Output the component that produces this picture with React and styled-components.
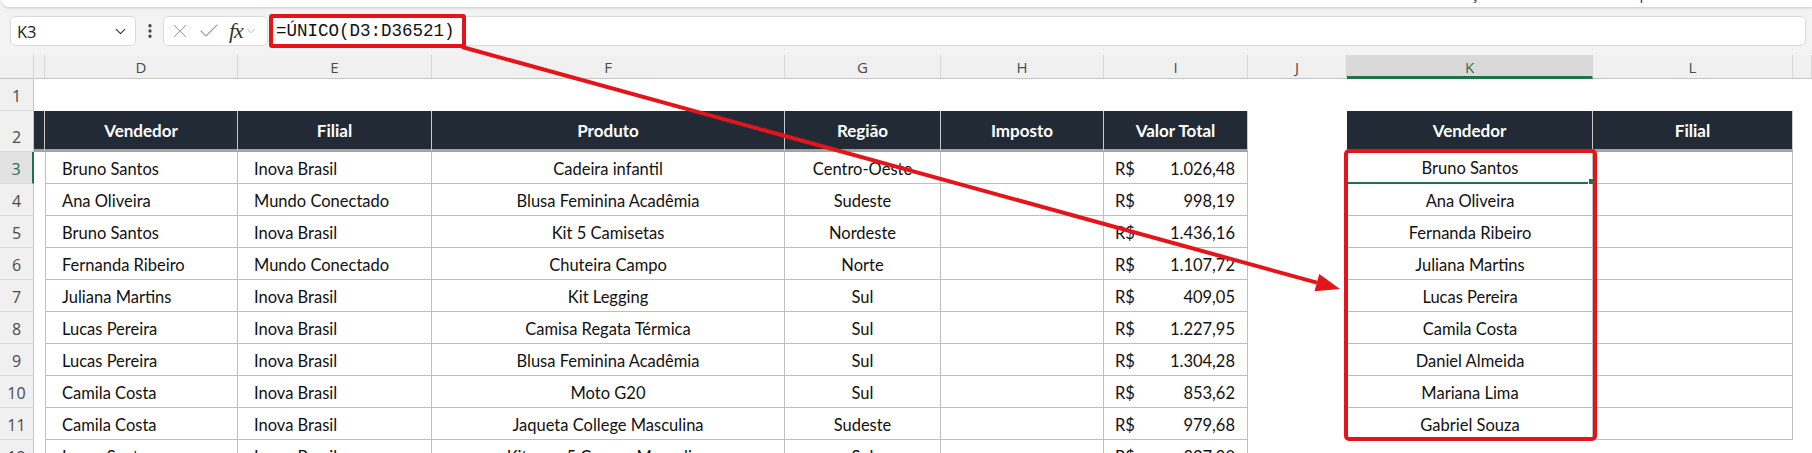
import React from "react";
import styled, { createGlobalStyle } from "styled-components";
import { X, Check, ChevronDown, EllipsisVertical } from "lucide-react";

const GlobalStyle = createGlobalStyle`
  html, body { margin: 0; padding: 0; background: #fff; }
  body { overflow: hidden; }
`;

// widths: row header, C, D, E, F, G, H, I, J, K, L, M
const COLS = [34, 11, 193, 194, 353, 156, 163, 144, 99, 246, 200, 19];
const LETTERS = ["", "", "D", "E", "F", "G", "H", "I", "J", "K", "L", ""];

const vendas = [
  ["Bruno Santos", "Inova Brasil", "Cadeira infantil", "Centro-Oeste", "1.026,48"],
  ["Ana Oliveira", "Mundo Conectado", "Blusa Feminina Acadêmia", "Sudeste", "998,19"],
  ["Bruno Santos", "Inova Brasil", "Kit 5 Camisetas", "Nordeste", "1.436,16"],
  ["Fernanda Ribeiro", "Mundo Conectado", "Chuteira Campo", "Norte", "1.107,72"],
  ["Juliana Martins", "Inova Brasil", "Kit Legging", "Sul", "409,05"],
  ["Lucas Pereira", "Inova Brasil", "Camisa Regata Térmica", "Sul", "1.227,95"],
  ["Lucas Pereira", "Inova Brasil", "Blusa Feminina Acadêmia", "Sul", "1.304,28"],
  ["Camila Costa", "Inova Brasil", "Moto G20", "Sul", "853,62"],
  ["Camila Costa", "Inova Brasil", "Jaqueta College Masculina", "Sudeste", "979,68"],
  ["Lucas Santos", "Inova Brasil", "Kit com 5 Cuecas Masculina", "Sul", "827,90"],
];

const unicos = [
  "Bruno Santos",
  "Ana Oliveira",
  "Fernanda Ribeiro",
  "Juliana Martins",
  "Lucas Pereira",
  "Camila Costa",
  "Daniel Almeida",
  "Mariana Lima",
  "Gabriel Souza",
];

const Page = styled.div`
  position: relative;
  width: 1812px;
  height: 453px;
  overflow: hidden;
  background: #f3f3f3;
  font-family: Lato, "Open Sans", sans-serif;
`;

const Ribbon = styled.div`
  height: 7px;
  margin-left: 2px;
  background: #fff;
  border-bottom-left-radius: 8px;
  box-shadow: 0 1px 3px rgba(0, 0, 0, 0.18);
  overflow: hidden;
  display: flex;
  padding-left: 1410px;
  gap: 118px;
`;

const RibbonLabel = styled.span`
  font: 15px "Open Sans", sans-serif;
  line-height: 15px;
  color: #333;
  margin-top: -14px;
  white-space: nowrap;
`;

const FormulaBar = styled.div`
  height: 48px;
  display: flex;
  align-items: center;
  padding: 0 6px 0 10px;
`;

const Box = styled.div`
  height: 30px;
  box-sizing: border-box;
  background: #fff;
  border: 1px solid #dcdcdc;
  border-radius: 5px;
  display: flex;
  align-items: center;
`;

const NameBox = styled(Box)`
  width: 126px;
  justify-content: space-between;
  padding: 0 6px 0 6px;
  font: 16.5px "Open Sans", sans-serif;
  color: #222;
`;

const Dots = styled.div`
  width: 27px;
  display: flex;
  justify-content: center;
  color: #444;
`;

const FxGroup = styled(Box)`
  width: 105px;
  padding-left: 5px;
  gap: 6px;
  color: #a0a0a0;
`;

const Fx = styled.span`
  font: italic 22px "Liberation Serif", serif;
  color: #333;
  margin-left: 2px;
  letter-spacing: -1px;
`;

const FormulaInput = styled(Box)`
  flex: 1;
  margin-left: 1px;
`;

const Highlight = styled.div`
  width: 197px;
  height: 34px;
  box-sizing: border-box;
  margin-left: -1px;
  border: 4px solid #e3141a;
  border-radius: 3px;
  display: flex;
  align-items: center;
  padding-left: 3px;
  font: 17.5px "Liberation Mono", monospace;
  color: #111;
`;

const Grid = styled.div`
  display: grid;
  grid-template-columns: ${COLS.map((c) => c + "px").join(" ")};
  grid-template-rows: 24px 32px 41px repeat(10, 32px);
  background: #fff;
`;

const ColHeader = styled.div`
  box-sizing: border-box;
  display: flex;
  align-items: center;
  justify-content: center;
  background: ${(p) => (p.$selected ? "#d9d9d9" : "#f0f0f0")};
  border-right: 1px solid #d6d6d6;
  border-bottom: ${(p) => (p.$selected ? "3px solid #217346" : "1px solid #c4c4c4")};
  padding-top: ${(p) => (p.$selected ? "2px" : "0")};
  font: 15px "Open Sans", sans-serif;
  color: ${(p) => (p.$selected ? "#217346" : "#4a4a4a")};
`;

const RowHeader = styled.div`
  box-sizing: border-box;
  display: flex;
  align-items: flex-end;
  justify-content: center;
  padding-bottom: 3px;
  background: ${(p) => (p.$selected ? "#e2e2e2" : "#f0f0f0")};
  border-right: ${(p) => (p.$selected ? "2px solid #217346" : "1px solid #c4c4c4")};
  border-bottom: 1px solid #dadada;
  font: 16px "Open Sans", sans-serif;
  color: ${(p) => (p.$selected ? "#217346" : "#4a4a4a")};
`;

const Blank = styled.div`
  background: #fff;
`;

const Head = styled.div`
  box-sizing: border-box;
  display: flex;
  align-items: center;
  justify-content: center;
  background: #222b35;
  border-right: 1px solid #c9c9c9;
  border-bottom: 3px solid #a3a3a3;
  color: #fff;
  font-weight: 700;
  font-size: 17px;
`;

const Cell = styled.div`
  position: relative;
  box-sizing: border-box;
  display: flex;
  align-items: center;
  justify-content: ${(p) => p.$align || "flex-start"};
  padding: 2px ${(p) => (p.$align === "space-between" ? "12px" : "0")} 0
    ${(p) => (p.$align === "flex-start" || !p.$align ? "16px" : p.$align === "space-between" ? "11px" : "0")};
  background: #fff;
  border-right: 1px solid #bfbfbf;
  border-bottom: ${(p) => (p.$active ? "2px solid #217346" : "1px solid #bfbfbf")};
  border-left: ${(p) => (p.$first ? "1px solid #bfbfbf" : "none")};
  color: #111;
  font-size: 16.5px;
  white-space: nowrap;
`;

const Handle = styled.span`
  position: absolute;
  right: -4px;
  bottom: -4px;
  width: 6px;
  height: 6px;
  background: #217346;
  border: 1px solid #fff;
`;

const Overlay = styled.svg`
  position: absolute;
  left: 0;
  top: 0;
  pointer-events: none;
`;

function SheetRows() {
  const out = [];
  out.push(<ColHeader key="corner" />);
  LETTERS.slice(1).map((l, i) =>
    out.push(
      <ColHeader key={"c" + i} $selected={l === "K"}>
        {l}
      </ColHeader>
    )
  );

  // row 1
  out.push(<RowHeader key="r1">1</RowHeader>);
  for (let i = 1; i < COLS.length; i++) out.push(<Blank key={"b1" + i} />);

  // row 2 (headers)
  out.push(<RowHeader key="r2">2</RowHeader>);
  ["", "Vendedor", "Filial", "Produto", "Região", "Imposto", "Valor Total"].forEach((h, i) =>
    out.push(<Head key={"h" + i}>{h}</Head>)
  );
  out.push(<Blank key="h-j" />);
  out.push(<Head key="h-k">Vendedor</Head>);
  out.push(<Head key="h-l">Filial</Head>);
  out.push(<Blank key="h-m" />);

  vendas.forEach((v, idx) => {
    const n = idx + 3;
    out.push(
      <RowHeader key={"r" + n} $selected={n === 3}>
        {n}
      </RowHeader>
    );
    out.push(<Blank key={"c" + n} />);
    out.push(<Cell key={"d" + n} $first>{v[0]}</Cell>);
    out.push(<Cell key={"e" + n}>{v[1]}</Cell>);
    out.push(<Cell key={"f" + n} $align="center">{v[2]}</Cell>);
    out.push(<Cell key={"g" + n} $align="center">{v[3]}</Cell>);
    out.push(<Cell key={"h" + n} $align="center" />);
    out.push(
      <Cell key={"i" + n} $align="space-between">
        <span>R$</span>
        <span>{v[4]}</span>
      </Cell>
    );
    out.push(<Blank key={"j" + n} />);
    if (idx < unicos.length) {
      out.push(
        <Cell key={"k" + n} $first $align="center" $active={n === 3}>
          {unicos[idx]}
          {n === 3 && <Handle />}
        </Cell>
      );
      out.push(<Cell key={"l" + n} $align="center" />);
    } else {
      out.push(<Blank key={"k" + n} />);
      out.push(<Blank key={"l" + n} />);
    }
    out.push(<Blank key={"m" + n} />);
  });
  return out;
}

export default function App() {
  // arrow: from formula box corner to the result column
  const x1 = 462, y1 = 47, tx = 1340, ty = 289;
  const dx = tx - x1, dy = ty - y1;
  const len = Math.hypot(dx, dy);
  const ux = dx / len, uy = dy / len;
  const bx = tx - ux * 24, by = ty - uy * 24;
  const head = `${tx},${ty} ${bx - uy * 9},${by + ux * 9} ${bx + uy * 9},${by - ux * 9}`;

  return (
    <>
      <GlobalStyle />
      <Page>
        <Ribbon>
          <RibbonLabel>Formatação</RibbonLabel>
          <RibbonLabel>Grupo</RibbonLabel>
        </Ribbon>
        <FormulaBar>
          <NameBox>
            <span>K3</span>
            <ChevronDown size={17} strokeWidth={1.6} color="#333" />
          </NameBox>
          <Dots>
            <EllipsisVertical size={18} strokeWidth={2.4} />
          </Dots>
          <FxGroup>
            <X size={22} strokeWidth={1.1} />
            <Check size={24} strokeWidth={1.1} />
            <Fx>fx</Fx>
            <ChevronDown size={14} strokeWidth={1.3} style={{ marginLeft: -5 }} />
          </FxGroup>
          <FormulaInput>
            <Highlight>=ÚNICO(D3:D36521)</Highlight>
          </FormulaInput>
        </FormulaBar>
        <Grid>
          <SheetRows />
        </Grid>
        <Overlay width="1812" height="453">
          <line x1={x1} y1={y1} x2={bx} y2={by} stroke="#e3141a" strokeWidth="4" />
          <polygon points={head} fill="#e3141a" />
          <rect x="1346" y="151" width="249" height="288" rx="3" fill="none" stroke="#e3141a" strokeWidth="4" />
        </Overlay>
      </Page>
    </>
  );
}
